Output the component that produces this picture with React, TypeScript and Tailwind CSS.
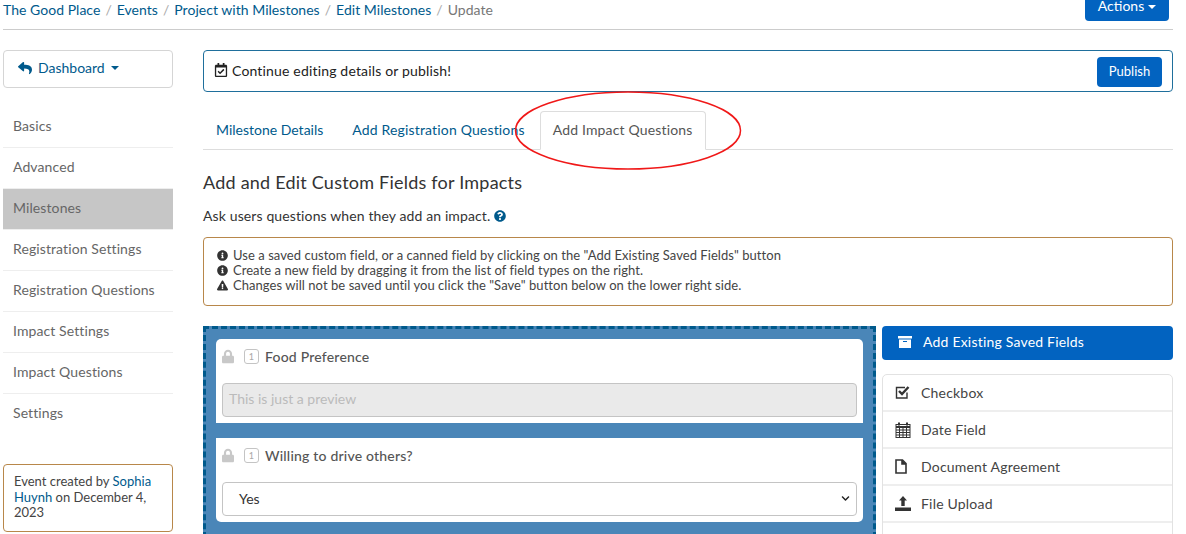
import React from "react";
import { FaReply, FaRegCalendarCheck, FaQuestionCircle, FaInfoCircle, FaExclamationTriangle, FaLock, FaChevronDown } from "react-icons/fa";

const font = { fontFamily: "Lato, 'Open Sans', sans-serif" };

const Caret = ({ className = "" }: { className?: string }) => (
  <span className={"inline-block w-0 h-0 border-x-[4px] border-x-transparent border-t-[4px] border-t-current align-middle " + className} />
);

const nav = ["Basics", "Advanced", "Milestones", "Registration Settings", "Registration Questions", "Impact Settings", "Impact Questions", "Settings"];

const CheckIcon = () => (
  <svg width="15" height="15" viewBox="0 0 15 15" fill="none">
    <path d="M12 7.5V13H1.5V2.5H10" stroke="#333" strokeWidth="1.4" />
    <path d="M4 6l3 3 6.5-7" stroke="#333" strokeWidth="2.4" />
  </svg>
);
const CalIcon = () => (
  <svg width="16" height="16" viewBox="0 0 16 16" fill="none" stroke="#333" strokeWidth="1">
    <rect x="1" y="2.5" width="14" height="13" />
    <path d="M1 5h14" strokeWidth="2" />
    <path d="M1 8h14M1 10.5h14M1 13h14M4.5 5v10M8 5v10M11.5 5v10" />
    <path d="M4 .5v3M12 .5v3" strokeWidth="2" />
  </svg>
);
const FileIcon = () => (
  <svg width="12" height="15" viewBox="0 0 12 15" fill="none" stroke="#333" strokeWidth="1.6">
    <path d="M1 1h6.5L11 4.5V14H1z" />
    <path d="M7 1v4h4" fill="#333" />
  </svg>
);
const UploadIcon = () => (
  <svg width="16" height="15" viewBox="0 0 16 15" fill="#333">
    <path d="M8 0l4 4.500H9.700V10H6.300V4.500H4z" />
    <path d="M0 11.500h16V15H0z" />
  </svg>
);
const BoxIcon = () => (
  <svg width="14" height="12" viewBox="0 0 14 12" fill="#fff">
    <path d="M0 0h14v2.500H0z" />
    <path d="M1 3.500h12V12H1zM5 5v1h4V5z" fillRule="evenodd" />
  </svg>
);

const fields: [React.ReactNode, string][] = [
  [<CheckIcon />, "Checkbox"],
  [<CalIcon />, "Date Field"],
  [<FileIcon />, "Document Agreement"],
  [<UploadIcon />, "File Upload"],
  [<span />, ""],
];

const CardHead = ({ label }: { label: string }) => (
  <div className="flex items-start h-[44px] pt-[10px] text-[#555] font-medium text-[14px] tracking-[0.2px] leading-[16px]">
    <FaLock className="text-[#c8c8c8] text-[14px] w-[12px] h-[15px] mr-[10px]" />
    <span className="w-[15px] h-[15px] border border-[#c4c4c4] rounded-[3px] text-[#aaa] text-[9px] flex items-center justify-center mr-[6px]">1</span>
    {label}
  </div>
);

export default function App() {
  return (
    <div style={font} className="relative w-[1186px] h-[534px] overflow-hidden bg-white text-[14px] text-[#333]">
      <div className="mx-[3px] w-[1170px] h-[30px] border-b border-[#ccc] flex justify-between items-start">
        <div className="flex gap-[5px] leading-[20px] text-[14px] tracking-[0.03px] text-[#005a8c]">
          <span>The Good Place</span><span className="text-[#aaa]">/</span>
          <span>Events</span><span className="text-[#aaa]">/</span>
          <span>Project with Milestones</span><span className="text-[#aaa]">/</span>
          <span>Edit Milestones</span><span className="text-[#aaa]">/</span>
          <span className="text-[#777]">Update</span>
        </div>
        <div className="mr-[4px] w-[84px] h-[21px] bg-[#0263c0] rounded-b-[4px] text-white flex items-end justify-center gap-[4px] pb-[5px] leading-[20px]">
          Actions <Caret className="mb-[7px]" />
        </div>
      </div>

      <div className="flex mt-[20px] ml-[3px]">
        <aside className="w-[170px] shrink-0">
          <div className="h-[38px] border border-[#d5d5d5] rounded-[4px] flex items-center pl-[14px] pb-[3px] text-[#005a8c] gap-[6px]">
            <FaReply className="text-[14px]" /> <span>Dashboard</span> <Caret />
          </div>
          <div className="mt-[19px]">
            {nav.map((n, i) => (
              <div key={n} className={"h-[41px] pl-[10px] pb-[3px] flex items-center tracking-[0.1px] text-[#666] " + (i < nav.length - 1 ? "border-b border-[#eee] " : "pb-[5px] ") + (n === "Milestones" ? "bg-[#c6c6c6] text-[#444]" : "")}>
                {n}
              </div>
            ))}
          </div>
          <div className="mt-[29px] h-[68px] border border-[#b8874a] rounded-[4px] px-[10px] py-[9px] text-[13px] leading-[15.500px] text-[#444]">
            Event created by <span className="text-[#005a8c]">Sophia Huynh</span> on December 4, 2023
          </div>
        </aside>

        <main className="ml-[30px] w-[970px]">
          <div className="h-[42px] border border-[#1f6f9c] rounded-[4px] flex items-center justify-between pt-[1px] pl-[10px] pr-[10px]">
            <div className="flex items-center gap-[4px] pb-[3px] text-[#222] tracking-[0.17px]">
              <FaRegCalendarCheck className="text-[14px]" /> Continue editing details or publish!
            </div>
            <div className="w-[65px] h-[30px] bg-[#0263c0] rounded-[4px] text-white text-[13px] pt-[1px] flex items-center justify-center">Publish</div>
          </div>

          <div className="mt-[19px] h-[39px] border-b border-[#ddd] flex">
            <div className="pl-[13px] pr-[14px] pb-[2px] flex items-center text-[#005a8c]">Milestone Details</div>
            <div className="pl-[15px] pr-[15px] pb-[2px] flex items-center text-[#005a8c] tracking-[0.16px]">Add Registration Questions</div>
            <div className="h-[39px] w-[166px] bg-white border border-[#ddd] border-b-white rounded-t-[4px] pb-[2px] flex items-center justify-center text-[#555] tracking-[0.16px]">Add Impact Questions</div>
          </div>

          <h2 className="mt-[20px] text-[18px] leading-[24px] tracking-[0.22px] text-[#333]">Add and Edit Custom Fields for Impacts</h2>
          <p className="mt-[12px] leading-[20px] flex items-center gap-[4px] text-[#333] tracking-[0.12px]">
            Ask users questions when they add an impact. <FaQuestionCircle className="text-[12px] text-[#005a8c]" />
          </p>

          <div className="mt-[11px] h-[69px] border border-[#b8874a] rounded-[4px] px-[13px] pt-[10px] text-[13px] leading-[15px] tracking-[0.05px] text-[#444]">
            <div className="flex items-center gap-[5px]"><FaInfoCircle className="text-[11px] text-[#333]" />Use a saved custom field, or a canned field by clicking on the "Add Existing Saved Fields" button</div>
            <div className="flex items-center gap-[5px]"><FaInfoCircle className="text-[11px] text-[#333]" />Create a new field by dragging it from the list of field types on the right.</div>
            <div className="flex items-center gap-[5px]"><FaExclamationTriangle className="text-[11px] text-[#333]" />Changes will not be saved until you click the "Save" button below on the lower right side.</div>
          </div>

          <div className="mt-[20px] flex gap-[6px] items-start">
            <div className="w-[673px] border-[3px] border-dashed border-[#005a8c] bg-[#4a86b8] px-[10px] pt-[10px] pb-[40px] flex flex-col gap-[15px]">
              <div className="bg-white rounded-t-[5px] h-[84px] px-[6px]">
                <CardHead label="Food Preference" />
                <div className="h-[34px] bg-[#eaeaea] border border-[#c4c4c4] rounded-[4px] flex items-center px-[6px] pb-[3px] text-[#bbb]">This is just a preview</div>
              </div>
              <div className="bg-white rounded-b-[5px] h-[84px] px-[6px]">
                <CardHead label="Willing to drive others?" />
                <div className="h-[34px] bg-white border border-[#c4c4c4] rounded-[4px] flex items-center justify-between pl-[16px] pr-[6px] pb-[2px] text-[#333]">
                  Yes <FaChevronDown className="text-[9px] text-[#222]" />
                </div>
              </div>
            </div>

            <div className="w-[291px]">
              <div className="h-[34px] bg-[#0263c0] rounded-[4px] text-white flex items-center pl-[16px] pb-[3px] gap-[11px] tracking-[0.2px]">
                <BoxIcon /> <span>Add Existing Saved Fields</span>
              </div>
              <div className="mt-[14px] border border-[#e2e2e2] rounded-t-[5px] tracking-[0.2px]">
                {fields.map(([icon, label], i) => (
                  <div key={i} className="h-[37px] flex items-center border-b-2 border-[#eee] text-[#444]">
                    <span className="w-[38px] pl-[12px] flex justify-start">{icon}</span>
                    {label}
                  </div>
                ))}
              </div>
            </div>
          </div>
        </main>
      </div>

      <svg className="absolute left-[513px] top-[90px] pointer-events-none" width="230" height="82" viewBox="0 0 230 82" fill="none">
        <ellipse cx="115" cy="40.500" rx="112.500" ry="38.500" stroke="#f01818" strokeWidth="1.500" />
      </svg>
    </div>
  );
}
